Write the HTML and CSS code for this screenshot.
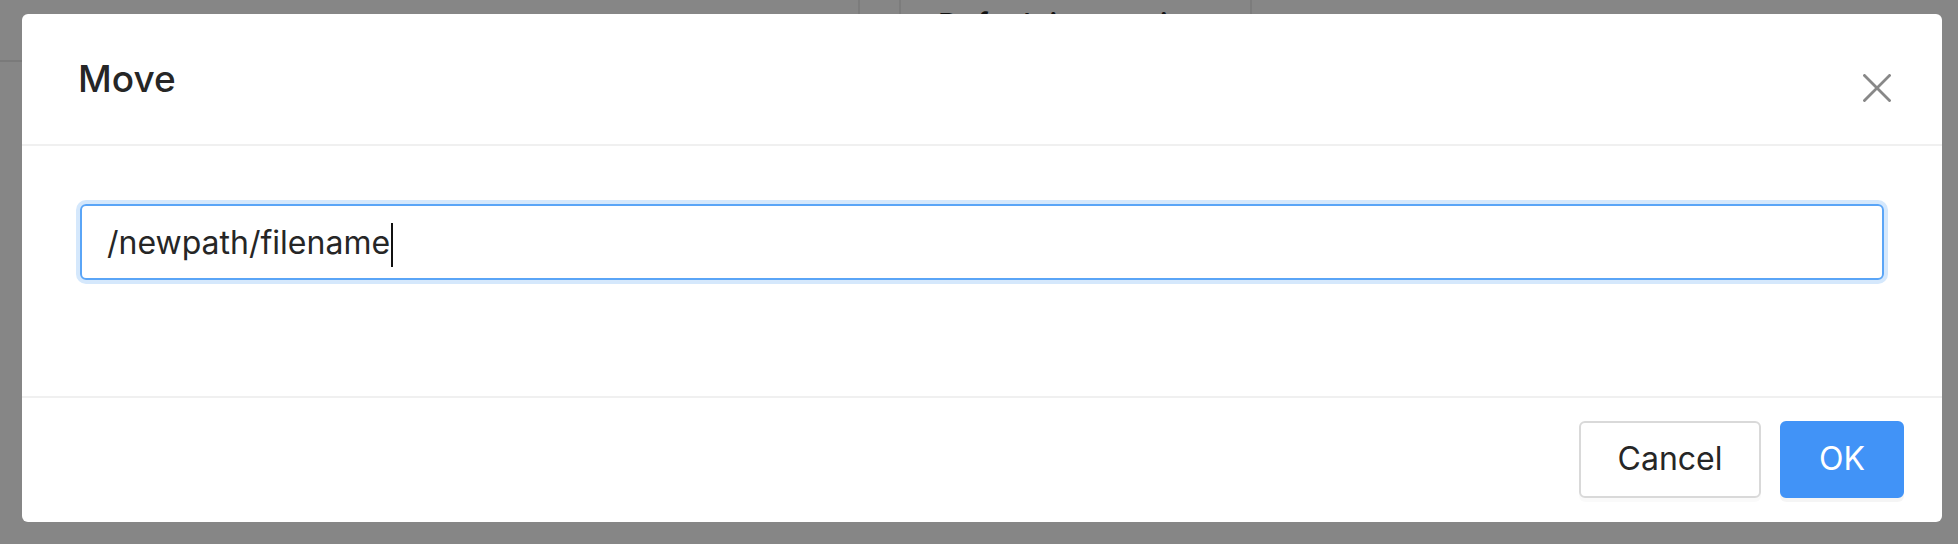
FILE: index.html
```html
<!DOCTYPE html>
<html lang="en">
<head>
<meta charset="utf-8">
<title>Move</title>
<link rel="stylesheet" href="styles.css">
</head>
<body>
<div class="page">
  <div class="app">
    <div class="app-left"></div>
    <div class="app-cell cell-a"></div>
    <div class="app-cell cell-b">Default integration</div>
    <div class="app-cell cell-c"></div>
  </div>
  <div class="mask">
    <div class="modal" role="dialog" aria-labelledby="modal-title">
      <div class="modal-header">
        <div class="modal-title" id="modal-title">Move</div>
        <button class="modal-close" type="button" aria-label="Close">
          <svg width="28" height="28" viewBox="0 0 28 28" aria-hidden="true">
            <path d="M1.5 1.5 L26.5 26.5 M26.5 1.5 L1.5 26.5" stroke="#888888" stroke-width="2.8" stroke-linecap="square" fill="none"/>
          </svg>
        </button>
      </div>
      <div class="modal-body">
        <div class="input">/newpath/filename<span class="caret"></span></div>
      </div>
      <div class="modal-footer">
        <button class="btn btn-default" type="button">Cancel</button>
        <button class="btn btn-primary" type="button">OK</button>
      </div>
    </div>
  </div>
</div>
</body>
</html>
```

FILE: styles.css
```css
* {
  box-sizing: border-box;
}

html, body {
  margin: 0;
  padding: 0;
}

body {
  font-family: "Inter", "Liberation Sans", sans-serif;
  color: #262626;
  background: #f5f5f5;
}

.page {
  position: relative;
  width: 1958px;
  height: 544px;
  overflow: hidden;
  background: #f5f5f5;
}

.app {
  display: flex;
  height: 100%;
}

.app-left {
  width: 858px;
  height: 62px;
  border-bottom: 2px solid #dedede;
}

.app-cell {
  height: 40px;
  border-left: 2px solid #e2e2e2;
}

.cell-a {
  width: 41px;
}

.cell-b {
  width: 351px;
  padding: 9px 0 0 37px;
  font-size: 30px;
  font-weight: 500;
  line-height: 1;
  color: #1f1f1f;
  white-space: nowrap;
  overflow: hidden;
}

.cell-c {
  flex: 1;
}

.mask {
  position: absolute;
  inset: 0;
  background: rgba(0, 0, 0, 0.45);
  padding: 14px 0 0 22px;
}

.modal {
  width: 1920px;
  background: #fff;
  border-radius: 6px;
  overflow: hidden;
}

.modal-header {
  position: relative;
  height: 132px;
  border-bottom: 2px solid #f0f0f0;
  display: flex;
  align-items: center;
  padding: 0 56px 2px;
}

.modal-title {
  font-size: 37px;
  font-weight: 500;
  color: #262626;
  line-height: 1;
}

.modal-close {
  position: absolute;
  top: 60px;
  right: 51px;
  width: 28px;
  height: 28px;
  padding: 0;
  border: 0;
  background: transparent;
  display: flex;
}

.modal-body {
  padding: 58px 58px 116px;
}

.input {
  height: 76px;
  border: 2px solid #5aa5f7;
  border-radius: 6px;
  box-shadow: 0 0 0 4px #d5e8fc;
  display: flex;
  align-items: center;
  padding: 2px 25px 0;
  font-size: 32px;
  color: #262626;
  line-height: 1;
}

.caret {
  display: inline-block;
  width: 2px;
  height: 44px;
  margin-left: 1px;
  margin-top: 4px;
  background: #111;
}

.modal-footer {
  border-top: 2px solid #f0f0f0;
  padding: 23px 38px 24px;
  display: flex;
  justify-content: flex-end;
  gap: 19px;
}

.btn {
  height: 77px;
  border-radius: 6px;
  font-family: inherit;
  font-size: 32px;
  line-height: 1;
  padding: 0 0 2px;
  border: 2px solid #d9d9d9;
  background: #fff;
  color: #262626;
}

.btn-default {
  width: 182px;
  box-shadow: 0 4px 0 rgba(0, 0, 0, 0.02);
}

.btn-primary {
  width: 124px;
  background: #4193f7;
  border-color: #4193f7;
  color: #fff;
  box-shadow: 0 4px 0 rgba(0, 0, 0, 0.04);
}
```
